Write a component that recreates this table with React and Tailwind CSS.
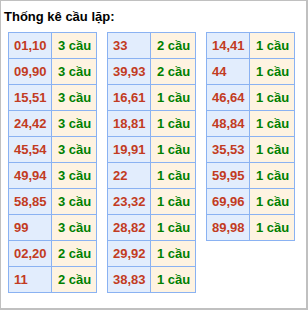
import React from "react";

const cols = [
  [
    ["01,10", "3 cầu"],
    ["09,90", "3 cầu"],
    ["15,51", "3 cầu"],
    ["24,42", "3 cầu"],
    ["45,54", "3 cầu"],
    ["49,94", "3 cầu"],
    ["58,85", "3 cầu"],
    ["99", "3 cầu"],
    ["02,20", "2 cầu"],
    ["11", "2 cầu"],
  ],
  [
    ["33", "2 cầu"],
    ["39,93", "2 cầu"],
    ["16,61", "1 cầu"],
    ["18,81", "1 cầu"],
    ["19,91", "1 cầu"],
    ["22", "1 cầu"],
    ["23,32", "1 cầu"],
    ["28,82", "1 cầu"],
    ["29,92", "1 cầu"],
    ["38,83", "1 cầu"],
  ],
  [
    ["14,41", "1 cầu"],
    ["44", "1 cầu"],
    ["46,64", "1 cầu"],
    ["48,84", "1 cầu"],
    ["35,53", "1 cầu"],
    ["59,95", "1 cầu"],
    ["69,96", "1 cầu"],
    ["89,98", "1 cầu"],
  ],
];

export default function App() {
  return (
    <div
      className="w-[308px] h-[310px] box-border bg-white border-l border-t border-r-2 border-b-2 border-[#c0c0c0] text-[13px] font-bold"
      style={{ fontFamily: '"Liberation Sans", Arial, sans-serif' }}
    >
      <div className="pt-[8px] pl-[3px] leading-[15px] text-black">Thống kê cầu lặp:</div>
      <div className="flex items-start gap-[10px] pl-[7px] mt-[8px]">
        {cols.map((rows, ci) => (
          <div key={ci} className="flex flex-col border-l border-t border-[#8ab2f2]">
            {rows.map(([n, c], ri) => (
              <div key={ri} className="flex h-[26px]">
                <div className="w-[43px] border-r border-b border-[#8ab2f2] bg-[#e2edfd] text-[#c23b22] pl-[5px] flex items-center leading-[15px]">
                  {n}
                </div>
                <div className="w-[45px] border-r border-b border-[#8ab2f2] bg-[#fef3e1] text-[#008000] pl-[6px] flex items-center leading-[15px]">
                  {c}
                </div>
              </div>
            ))}
          </div>
        ))}
      </div>
    </div>
  );
}
